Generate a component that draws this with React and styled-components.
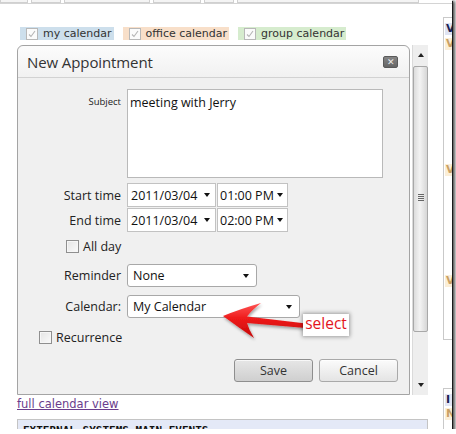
import React from "react";
import styled, { createGlobalStyle } from "styled-components";

const GlobalStyle = createGlobalStyle`
  html, body {
    margin: 0;
    padding: 0;
    background: #fff;
    overflow: hidden;
  }
`;

const Frame = styled.div`
  position: relative;
  width: 452px;
  height: 429px;
  overflow: hidden;
  background: #fff;
  box-shadow: 1px 1px 0 #1a1a1a, 2px 2px 3px 1px rgba(0, 0, 0, 0.7);
`;

const TopStrip = styled.div`
  display: flex;
  height: 3px;
  border-bottom: 1px solid #d4d4d4;
`;

const StripCell = styled.div`
  width: ${(props) => props.$w}px;
  margin-right: 3px;
  border: 1px solid #d0d0d0;
  border-top: none;
  background: #f4f4f4;
`;

const Content = styled.div`
  display: grid;
  grid-template-columns: 411px 1fr;
  column-gap: 15px;
  padding-left: 17px;
`;

const LeftCol = styled.div`
  display: flex;
  flex-direction: column;
`;

const Legend = styled.div`
  display: flex;
  gap: 9px;
  margin-top: 23px;
  padding-left: 3px;
  height: 13px;
`;

const LegendItem = styled.div`
  display: flex;
  align-items: center;
  gap: 5px;
  height: 13px;
  padding: 0 2px 0 6px;
  background: ${(props) => props.$bg};
  font-family: "DejaVu Sans", Verdana, sans-serif;
  font-size: 11px;
  color: #333;
`;

const TickBox = styled.span`
  display: inline-flex;
  align-items: center;
  justify-content: center;
  width: 10px;
  height: 10px;
  border: 1px solid #b8b8b8;
  background: #fbfbfb;
  svg {
    display: block;
  }
`;

const DialogRow = styled.div`
  display: flex;
  margin-top: 5px;
  height: 350px;
`;

const Dialog = styled.div`
  position: relative;
  box-sizing: border-box;
  width: 393px;
  height: 350px;
  border: 1px solid #a4a4a4;
  border-radius: 6px 6px 0 0;
  background: #f0f0f0;
  display: flex;
  flex-direction: column;
  font-family: "Open Sans", "Segoe UI", sans-serif;
`;

const Header = styled.div`
  display: flex;
  align-items: center;
  justify-content: space-between;
  height: 31px;
  padding: 0 11px 0 9px;
  border-bottom: 1px solid #d2d2d2;
  border-radius: 6px 6px 0 0;
  background: linear-gradient(#fcfcfc, #f1f1f1);
`;

const Title = styled.div`
  font-size: 15px;
  color: #333;
  letter-spacing: -0.1px;
`;

const CloseBtn = styled.div`
  width: 13px;
  height: 10px;
  border-radius: 2px;
  background: linear-gradient(#858585, #666);
  border: 1px solid #5a5a5a;
  display: flex;
  align-items: center;
  justify-content: center;
  color: #eee;
  font-size: 9px;
  line-height: 1;
`;

const Form = styled.div`
  display: flex;
  flex-direction: column;
`;

const FieldRow = styled.div`
  display: grid;
  grid-template-columns: 103px auto;
  column-gap: 6px;
  align-items: ${(props) => (props.$top ? "start" : "center")};
  margin-top: ${(props) => props.$mt}px;
`;

const Label = styled.div`
  text-align: right;
  font-size: ${(props) => props.$size || 12.5}px;
  color: #222;
  padding-top: ${(props) => props.$pt || 0}px;
`;

const TextBox = styled.div`
  box-sizing: border-box;
  width: 256px;
  height: 89px;
  background: #fff;
  border: 1px solid #b9b9b9;
  padding: 4px 2px;
  font-size: 12.5px;
  color: #111;
`;

const Pair = styled.div`
  display: flex;
  gap: 1px;
`;

const DropBox = styled.div`
  box-sizing: border-box;
  display: flex;
  align-items: center;
  justify-content: space-between;
  width: ${(props) => props.$w}px;
  height: ${(props) => props.$h || 23}px;
  padding: 0 ${(props) => props.$pr}px 0 ${(props) => props.$pl}px;
  background: #fff;
  border: 1px solid ${(props) => (props.$round ? "#a8a8a8" : "#c2c2c2")};
  border-radius: ${(props) => (props.$round ? 3 : 0)}px;
  font-size: 12.5px;
  color: #111;
`;

const Caret = styled.span`
  width: 0;
  height: 0;
  border-left: 3.5px solid transparent;
  border-right: 3.5px solid transparent;
  border-top: 4px solid #111;
`;

const CheckRow = styled.div`
  display: flex;
  align-items: center;
  gap: 4px;
  margin-top: ${(props) => props.$mt}px;
  padding-left: ${(props) => props.$indent}px;
  font-size: 12.5px;
  color: #222;
  height: 14px;
`;

const CheckBox = styled.span`
  box-sizing: border-box;
  width: 13px;
  height: 13px;
  border: 1px solid #8f8f8f;
  background: linear-gradient(135deg, #e4e4e4, #fafafa);
  box-shadow: inset 0 0 0 1px #f6f6f6;
`;

const Buttons = styled.div`
  display: flex;
  justify-content: flex-end;
  gap: 6px;
  margin-top: 15px;
  padding-right: 11px;
`;

const Button = styled.div`
  box-sizing: border-box;
  width: 79px;
  height: 23px;
  display: flex;
  align-items: center;
  justify-content: center;
  border-radius: 3px;
  font-size: 12.5px;
  color: #333;
  border: 1px solid ${(props) => (props.$primary ? "#8e8e8e" : "#a9a9a9")};
  background: ${(props) =>
    props.$primary
      ? "linear-gradient(#e6e6e6, #cfcfcf)"
      : "linear-gradient(#fbfbfb, #e4e4e4)"};
  box-shadow: inset 0 1px 0 rgba(255, 255, 255, 0.7);
`;

const ArrowArt = styled.svg`
  position: absolute;
  left: 200px;
  top: 255px;
  overflow: visible;
`;

const Callout = styled.div`
  position: absolute;
  left: 285px;
  top: 268px;
  width: 46px;
  height: 22px;
  display: flex;
  align-items: center;
  justify-content: center;
  background: #fff;
  box-shadow: 0 0 4px 1px rgba(0, 0, 0, 0.35);
  color: #e3141d;
  font-size: 15.5px;
  line-height: 1;
  padding-bottom: 2px;
  box-sizing: border-box;
`;

const Scrollbar = styled.div`
  box-sizing: border-box;
  width: 16px;
  height: 350px;
  margin-left: 2px;
  display: flex;
  flex-direction: column;
  align-items: center;
  background: #eeeeee;
  border-left: 1px solid #dadada;
`;

const ScrollBtn = styled.div`
  height: ${(props) => props.$h}px;
  width: 100%;
  display: flex;
  align-items: center;
  justify-content: center;
  span {
    width: 0;
    height: 0;
    border-left: 3px solid transparent;
    border-right: 3px solid transparent;
    ${(props) =>
      props.$down ? "border-top: 4px solid #222;" : "border-bottom: 4px solid #222;"}
  }
`;

const Thumb = styled.div`
  box-sizing: border-box;
  width: 15px;
  height: 266px;
  margin-top: 2px;
  border: 1px solid #a8a8a8;
  border-radius: 2px;
  background: linear-gradient(90deg, #dcdcdc, #f3f3f3 45%, #d6d6d6);
  display: flex;
  align-items: center;
  justify-content: center;
  padding-bottom: 3px;
`;

const Grip = styled.div`
  display: flex;
  flex-direction: column;
  gap: 1px;
  span {
    width: 6px;
    height: 1px;
    background: #666;
  }
`;

const Track = styled.div`
  flex: 1;
`;

const FullLink = styled.a`
  margin-top: 3px;
  width: max-content;
  font-family: "DejaVu Sans", Verdana, sans-serif;
  font-size: 11.5px;
  line-height: 13px;
  color: #6a3d8c;
  text-decoration: underline;
`;

const EventsBox = styled.div`
  margin-top: 8px;
  height: 22px;
  border: 1px solid #c4c4c4;
  background: #e4e9f7;
  padding: 4px 0 0 5px;
  box-sizing: border-box;
  font-family: "DejaVu Sans Mono", monospace;
  font-weight: bold;
  font-size: 11px;
  color: #111;
  white-space: nowrap;
`;

const RightCol = styled.div`
  display: flex;
  flex-direction: column;
  padding-top: 13px;
`;

const SideBox = styled.div`
  box-sizing: border-box;
  height: ${(props) => props.$h}px;
  margin-top: ${(props) => props.$mt || 0}px;
  border: 1px solid #c9c9c9;
  border-right: none;
  padding: 5px 0 0 1px;
  display: flex;
  flex-direction: column;
  gap: ${(props) => props.$gap || 3}px;
`;

const SideTag = styled.div`
  height: 12px;
  background: ${(props) => props.$bg};
  color: ${(props) => props.$fg};
  font-family: "DejaVu Sans", sans-serif;
  font-weight: bold;
  font-size: 11px;
  line-height: 12px;
  padding-left: 1px;
  margin-top: ${(props) => props.$mt || 0}px;
`;

const Marks = styled.div`
  display: flex;
  flex-direction: column;
  gap: ${(props) => props.$gap}px;
  padding-left: 8px;
  margin-top: ${(props) => props.$mt || 0}px;
  span {
    width: 2px;
    height: 3px;
    background: #b24a2a;
  }
`;

const Tick = () => (
  <TickBox>
    <svg width="8" height="8" viewBox="0 0 8 8">
      <path d="M1 4.5 L3 6.5 L7 1" fill="none" stroke="#b5b5b5" strokeWidth="1.1" />
    </svg>
  </TickBox>
);

const MarkList = ({ count, gap, mt }) => (
  <Marks $gap={gap} $mt={mt}>
    {Array.from({ length: count }).map((_, i) => (
      <span key={i} />
    ))}
  </Marks>
);

const App = () => {
  return (
    <>
      <GlobalStyle />
      <Frame>
        <TopStrip>
          <StripCell $w={26} />
          <StripCell $w={28} />
          <StripCell $w={84} />
          <StripCell $w={46} />
          <StripCell $w={28} />
          <StripCell $w={180} />
        </TopStrip>
        <Content>
          <LeftCol>
            <Legend>
              <LegendItem $bg="#cddfec">
                <Tick />
                my calendar
              </LegendItem>
              <LegendItem $bg="#f8dfc9">
                <Tick />
                office calendar
              </LegendItem>
              <LegendItem $bg="#d6ecce">
                <Tick />
                group calendar
              </LegendItem>
            </Legend>

            <DialogRow>
              <Dialog>
                <Header>
                  <Title>New Appointment</Title>
                  <CloseBtn>✕</CloseBtn>
                </Header>
                <Form>
                  <FieldRow $mt={11} $top>
                    <Label $size={9.5} $pt={6}>Subject</Label>
                    <TextBox>meeting with Jerry</TextBox>
                  </FieldRow>
                  <FieldRow $mt={5}>
                    <Label>Start time</Label>
                    <Pair>
                      <DropBox $w={89} $h={24} $pl={3} $pr={5}>
                        2011/03/04
                        <Caret />
                      </DropBox>
                      <DropBox $w={71} $h={24} $pl={2} $pr={4}>
                        01:00 PM
                        <Caret />
                      </DropBox>
                    </Pair>
                  </FieldRow>
                  <FieldRow $mt={1}>
                    <Label>End time</Label>
                    <Pair>
                      <DropBox $w={89} $h={24} $pl={3} $pr={5}>
                        2011/03/04
                        <Caret />
                      </DropBox>
                      <DropBox $w={71} $h={24} $pl={2} $pr={4}>
                        02:00 PM
                        <Caret />
                      </DropBox>
                    </Pair>
                  </FieldRow>
                  <CheckRow $mt={7} $indent={48}>
                    <CheckBox />
                    All day
                  </CheckRow>
                  <FieldRow $mt={11}>
                    <Label>Reminder</Label>
                    <DropBox $round $w={130} $pl={5} $pr={7}>
                      None
                      <Caret />
                    </DropBox>
                  </FieldRow>
                  <FieldRow $mt={8}>
                    <Label>Calendar:</Label>
                    <DropBox $round $w={173} $pl={5} $pr={7}>
                      My Calendar
                      <Caret />
                    </DropBox>
                  </FieldRow>
                  <CheckRow $mt={12} $indent={21}>
                    <CheckBox />
                    Recurrence
                  </CheckRow>
                  <Buttons>
                    <Button $primary>Save</Button>
                    <Button>Cancel</Button>
                  </Buttons>
                </Form>

                <ArrowArt width="90" height="40" viewBox="0 0 90 40">
                  <defs>
                    <linearGradient id="redFill" x1="0" y1="0" x2="0" y2="1">
                      <stop offset="0" stopColor="#ff5454" />
                      <stop offset="0.45" stopColor="#ee1a1a" />
                      <stop offset="1" stopColor="#c40808" />
                    </linearGradient>
                    <filter id="soft" x="-20%" y="-20%" width="140%" height="150%">
                      <feDropShadow dx="1" dy="2" stdDeviation="1.5" floodColor="#000" floodOpacity="0.35" />
                    </filter>
                  </defs>
                  <path
                    d="M5 15 Q22 8 43 2 Q34 9 29 15.5 L88 22.5 L88 27 L29 22 Q31 29 36 37 Q20 26 5 15 Z"
                    fill="url(#redFill)"
                    filter="url(#soft)"
                  />
                </ArrowArt>
                <Callout>select</Callout>
              </Dialog>

              <Scrollbar>
                <ScrollBtn $h={19}>
                  <span />
                </ScrollBtn>
                <Thumb>
                  <Grip>
                    <span />
                    <span />
                    <span />
                    <span />
                  </Grip>
                </Thumb>
                <Track />
                <ScrollBtn $h={20} $down>
                  <span />
                </ScrollBtn>
              </Scrollbar>
            </DialogRow>

            <FullLink href="#">full calendar view</FullLink>
            <EventsBox>EXTERNAL SYSTEMS MAIN EVENTS</EventsBox>
          </LeftCol>

          <RightCol>
            <SideBox $h={323}>
              <SideTag $bg="#dfe4f3" $fg="#1b2152">V</SideTag>
              <SideTag $bg="#fbeed7" $fg="#c9a064">V</SideTag>
              <MarkList count={8} gap={10} mt={8} />
              <SideTag $bg="#fbeed7" $fg="#c9a064" $mt={6}>V</SideTag>
              <MarkList count={7} gap={10} mt={8} />
              <SideTag $bg="#fbeed7" $fg="#c9a064" $mt={4}>V</SideTag>
              <MarkList count={3} gap={10} mt={6} />
            </SideBox>
            <SideBox $h={60} $mt={48} $gap={2}>
              <SideTag $bg="#e3e6f4" $fg="#1b2152">I</SideTag>
              <SideTag $bg="#fbeed7" $fg="#c9a064">N</SideTag>
            </SideBox>
          </RightCol>
        </Content>
      </Frame>
    </>
  );
};

export default App;
